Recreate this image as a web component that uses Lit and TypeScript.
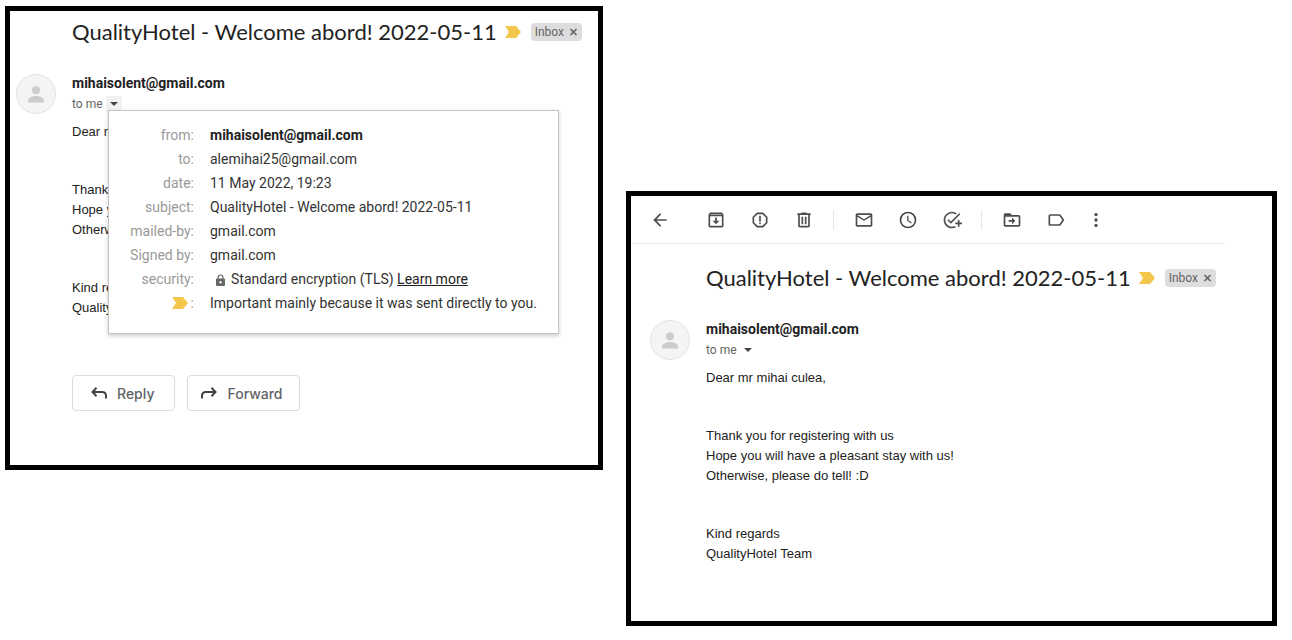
import { LitElement, html, svg, css } from "lit";
import { customElement, property } from "lit/decorators.js";

const toolbarIcons: Record<string, unknown> = {
  back: svg`<path d="M20 11H7.83l5.59-5.59L12 4l-8 8 8 8 1.41-1.41L7.83 13H20v-2z"/>`,
  archive: svg`<path d="M19 3H5L3 5.4V19c0 1.1.9 2 2 2h14c1.1 0 2-.9 2-2V5.4L19 3zM5.9 4.8h12.2l.5.7H5.4l.5-.7zM5 19V7.400h14V19H5z"/><path d="M11 9h2v4h3l-4 4-4-4h3z"/>`,
  spam: svg`<path d="M15.73 3H8.27L3 8.27v7.460L8.270 21h7.460L21 15.730V8.270L15.730 3zM19 14.900L14.900 19H9.100L5 14.900V9.100L9.100 5h5.800L19 9.100v5.800z"/><circle cx="12" cy="16" r="1.100"/><path d="M11 7h2v7h-2z"/>`,
  trash: svg`<path d="M15 4V3H9v1H4v2h1v13c0 1.100.900 2 2 2h10c1.100 0 2-.900 2-2V6h1V4h-5zm2 15H7V6h10v13z"/><path d="M9 8h2v9H9zM13 8h2v9h-2z"/>`,
  unread: svg`<path d="M20 4H4c-1.100 0-2 .900-2 2v12c0 1.100.900 2 2 2h16c1.100 0 2-.900 2-2V6c0-1.100-.900-2-2-2zm0 14H4V8l8 5 8-5v10zm-8-7L4 6h16l-8 5z"/>`,
  snooze: svg`<path d="M12 2a10 10 0 1 0 0 20 10 10 0 0 0 0-20zm0 18a8 8 0 1 1 0-16 8 8 0 0 1 0 16z"/><path d="M12.500 7H11v6l4.700 3.200.9-1.300-4.100-2.700z"/>`,
  task: svg`<path d="M22 5.180L10.590 16.600l-4.240-4.240 1.410-1.410 2.830 2.830 10-10L22 5.180zM12 20c-4.410 0-8-3.590-8-8s3.590-8 8-8c1.570 0 3.040.460 4.280 1.250l1.450-1.450A10.020 10.020 0 0 0 12 2C6.480 2 2 6.480 2 12s4.480 10 10 10c1.730 0 3.360-.440 4.780-1.220l-1.500-1.500c-1 .460-2.110.720-3.280.720zm7-5h-3v2h3v3h2v-3h3v-2h-3v-3h-2v3z"/>`,
  move: svg`<path d="M20 6h-8l-2-2H4c-1.100 0-2 .900-2 2v12c0 1.100.900 2 2 2h16c1.100 0 2-.900 2-2V8c0-1.100-.900-2-2-2zm0 12H4V8h16v10z"/><path d="M12 9v3H8v2h4v3l4-4z"/>`,
  label: svg`<path d="M17.630 5.840C17.270 5.330 16.670 5 16 5L5 5.010C3.900 5.010 3 5.900 3 7v10c0 1.100.900 1.990 2 1.990L16 19c.670 0 1.270-.330 1.630-.840L22 12l-4.370-6.160zM16 17H5V7h11l3.550 5L16 17z"/>`,
  more: svg`<circle cx="12" cy="5.500" r="2"/><circle cx="12" cy="12" r="2"/><circle cx="12" cy="18.500" r="2"/>`,
};

const marker = html`<svg class="marker" viewBox="0 0 16 12" aria-hidden="true">
  <path fill="#f4c64b" d="M0 0h11l5 6-5 6H0l4-6z" />
</svg>`;

@customElement("mail-toolbar")
export class MailToolbar extends LitElement {
  static styles = css`
    :host {
      display: flex;
      align-items: center;
      height: 47px;
      margin: 0 47px 0 1px;
      padding-left: 6px;
      border-bottom: 1px solid #ececec;
    }
    .tool {
      width: 44px;
      height: 40px;
      flex: none;
      display: flex;
      align-items: center;
      justify-content: center;
      padding: 0;
      border: 0;
      background: none;
    }
    .tool svg {
      width: 20px;
      height: 20px;
      fill: #4c4c4c;
    }
    .back {
      margin-right: 12px;
    }
    .more {
      width: 36px;
    }
    .divider {
      width: 1px;
      height: 20px;
      margin: 0 8px 0 7px;
      background: #e6e6e6;
    }
  `;

  private tool(icon: string, label: string) {
    return html`<button class="tool ${icon}" type="button" aria-label=${label}>
      <svg viewBox="0 0 24 24" aria-hidden="true">${toolbarIcons[icon]}</svg>
    </button>`;
  }

  render() {
    return html`
      ${this.tool("back", "Back to Inbox")} ${this.tool("archive", "Archive")}
      ${this.tool("spam", "Report spam")} ${this.tool("trash", "Delete")}
      <span class="divider"></span>
      ${this.tool("unread", "Mark as unread")} ${this.tool("snooze", "Snooze")}
      ${this.tool("task", "Add to Tasks")}
      <span class="divider"></span>
      ${this.tool("move", "Move to")} ${this.tool("label", "Labels")}
      ${this.tool("more", "More")}
    `;
  }
}

@customElement("mail-details")
export class MailDetails extends LitElement {
  static styles = css`
    :host {
      display: block;
      box-sizing: border-box;
      padding: 12px 21px 18px 16px;
      border: 1px solid #c4c4c4;
      background: #fff;
      box-shadow: 0 2px 4px rgba(0, 0, 0, 0.2);
      color: #333;
      font-size: 14px;
      line-height: 24px;
      white-space: nowrap;
    }
    .rows {
      border-collapse: collapse;
    }
    .key {
      min-width: 69px;
      padding: 0 16px 0 0;
      color: #999;
      font-weight: 400;
      text-align: right;
    }
    .value {
      padding: 0;
    }
    .strong {
      font-weight: 700;
      color: #222;
    }
    .marker {
      width: 16px;
      height: 12px;
      margin-right: 3px;
      vertical-align: -1px;
    }
    .lock {
      width: 9px;
      height: 12px;
      margin: 0 6px;
      vertical-align: -2px;
    }
    .link {
      color: #222;
      text-decoration: underline;
    }
  `;

  render() {
    const rows: [unknown, unknown][] = [
      ["from:", html`<span class="strong">mihaisolent@gmail.com</span>`],
      ["to:", "alemihai25@gmail.com"],
      ["date:", "11 May 2022, 19:23"],
      ["subject:", "QualityHotel - Welcome abord! 2022-05-11"],
      ["mailed-by:", "gmail.com"],
      ["Signed by:", "gmail.com"],
      [
        "security:",
        html`<svg class="lock" viewBox="0 0 9 12" aria-hidden="true">
            <path d="M2 5V3.500a2.500 2.500 0 0 1 5 0V5" fill="none" stroke="#666" stroke-width="1.200" />
            <path fill-rule="evenodd" d="M1 4.500h7a1 1 0 0 1 1 1V11a1 1 0 0 1-1 1H1a1 1 0 0 1-1-1V5.500a1 1 0 0 1 1-1zM4.500 7a1.200 1.200 0 1 0 0 2.400 1.200 1.200 0 0 0 0-2.400z" fill="#666" />
          </svg>Standard encryption (TLS) <a class="link" href="#">Learn more</a>`,
      ],
      [html`${marker}:`, "Important mainly because it was sent directly to you."],
    ];
    return html`<table class="rows">
      <tbody>
        ${rows.map(
          ([key, value]) => html`<tr>
            <th class="key" scope="row">${key}</th>
            <td class="value">${value}</td>
          </tr>`,
        )}
      </tbody>
    </table>`;
  }
}

@customElement("mail-message")
export class MailMessage extends LitElement {
  @property({ type: Boolean, reflect: true }) expanded = false;

  static styles = css`
    :host {
      display: block;
    }
    .subject {
      display: flex;
      align-items: center;
      height: 42px;
      padding-left: 56px;
      white-space: nowrap;
    }
    .title {
      margin: 0;
      color: #222;
      font-family: Lato, sans-serif;
      font-size: 22px;
      line-height: 28px;
      font-weight: 400;
    }
    .marker {
      width: 16px;
      height: 12px;
      flex: none;
      margin: 0 10px 0 8px;
    }
    .chip {
      display: flex;
      align-items: center;
      gap: 5px;
      height: 18px;
      padding: 0 4px;
      border-radius: 4px;
      background: #ddd;
      color: #666;
      font-size: 12px;
      line-height: 18px;
    }
    .remove {
      display: flex;
      padding: 0;
      border: 0;
      background: none;
    }
    .remove svg {
      width: 9px;
      height: 8px;
    }
    .message {
      display: grid;
      grid-template-columns: 40px 1fr;
      column-gap: 16px;
      padding-top: 20px;
    }
    .avatar {
      width: 40px;
      height: 40px;
      margin-top: 1px;
    }
    .sender {
      margin: 0;
      color: #222;
      font-size: 14px;
      line-height: 20px;
      font-weight: 700;
    }
    .recipient {
      position: relative;
      display: flex;
      align-items: center;
      gap: 3px;
      height: 22px;
      color: #666;
      font-size: 12px;
    }
    .toggle {
      display: flex;
      align-items: center;
      justify-content: center;
      width: 16px;
      height: 16px;
      padding: 0;
      border: 0;
      background: none;
    }
    :host([expanded]) .toggle {
      background: #f1f1f1;
    }
    .toggle svg {
      width: 8px;
      height: 4px;
    }
    .details {
      position: absolute;
      top: 17px;
      left: 36px;
    }
    .body {
      display: flex;
      flex-direction: column;
      gap: 38px;
      padding-top: 7px;
      color: #222;
      font-family: "Liberation Sans", Arial, sans-serif;
      font-size: 13px;
      line-height: 20px;
    }
    .paragraph {
      margin: 0;
    }
    .actions {
      display: flex;
      gap: 12px;
      padding-top: 57px;
    }
    .action {
      display: flex;
      align-items: center;
      gap: 10px;
      height: 36px;
      padding: 0 16px 0 18px;
      border: 1px solid #dadce0;
      border-radius: 4px;
      background: #fff;
      color: #5f6368;
      font-family: Inter, sans-serif;
      font-size: 14px;
      font-weight: 500;
    }
    .action svg {
      width: 16px;
      height: 12px;
      fill: none;
      stroke: #444;
      stroke-width: 2;
    }
    .reply {
      padding-right: 20px;
    }
    .forward {
      padding-left: 13px;
    }
  `;

  render() {
    return html`
      <header class="subject">
        <h2 class="title">QualityHotel - Welcome abord! 2022-05-11</h2>
        ${marker}
        <span class="chip"
          >Inbox
          <button class="remove" type="button" aria-label="Remove label Inbox">
            <svg viewBox="0 0 9 8" aria-hidden="true">
              <path d="M1.500 1l6 6M7.500 1l-6 6" stroke="#666" stroke-width="1.700" />
            </svg>
          </button>
        </span>
      </header>
      <article class="message">
        <svg class="avatar" viewBox="0 0 40 40" aria-hidden="true">
          <circle cx="20" cy="20" r="19.500" fill="#f4f4f4" stroke="#e2e2e2" />
          <circle cx="20" cy="16.200" r="4" fill="#ccc" />
          <path d="M12 28.500v-2c0-3 4.500-4.500 8-4.500s8 1.500 8 4.500v2z" fill="#ccc" />
        </svg>
        <div class="content">
          <h3 class="sender">mihaisolent@gmail.com</h3>
          <div class="recipient">
            to me
            <button class="toggle" type="button" aria-label="Show details" aria-expanded=${this.expanded ? "true" : "false"}>
              <svg viewBox="0 0 8 4" aria-hidden="true"><path d="M0 0h8L4 4z" fill="#444" /></svg>
            </button>
            ${this.expanded ? html`<mail-details class="details"></mail-details>` : null}
          </div>
          <div class="body">
            <p class="paragraph">Dear mr mihai culea,</p>
            <p class="paragraph">
              Thank you for registering with us<br />Hope you will have a pleasant stay with
              us!<br />Otherwise, please do tell! :D
            </p>
            <p class="paragraph">Kind regards<br />QualityHotel Team</p>
          </div>
          ${this.expanded
            ? html`<div class="actions">
                <button class="action reply" type="button">
                  <svg viewBox="0 0 16 12" aria-hidden="true"><path d="M5.500 .8L1.500 5l4 4.200M1.500 5H11q4 0 4 4v2.500" /></svg>
                  Reply
                </button>
                <button class="action forward" type="button">
                  <svg viewBox="0 0 16 12" aria-hidden="true"><path d="M10.500 .8l4 4.200-4 4.200M14.500 5H5Q1 5 1 9v2.500" /></svg>
                  Forward
                </button>
              </div>`
            : null}
        </div>
      </article>
    `;
  }
}

@customElement("app-root")
export class AppRoot extends LitElement {
  static styles = css`
    :host {
      display: grid;
      grid-template-columns: 598fr 651fr;
      column-gap: 23px;
      align-items: start;
      box-sizing: border-box;
      min-height: 100vh;
      padding: 6px 15px 14px 5px;
      background: #fff;
      font-family: Roboto, sans-serif;
    }
    .panel {
      min-width: 0;
      border: 5px solid #000;
      background: #fff;
    }
    .first {
      padding: 0 6px 54px;
    }
    .second {
      margin-top: 185px;
    }
    .mail {
      padding: 13px 19px 57px;
    }
  `;

  render() {
    return html`
      <section class="panel first">
        <mail-message expanded></mail-message>
      </section>
      <section class="panel second">
        <mail-toolbar></mail-toolbar>
        <div class="mail"><mail-message></mail-message></div>
      </section>
    `;
  }
}
